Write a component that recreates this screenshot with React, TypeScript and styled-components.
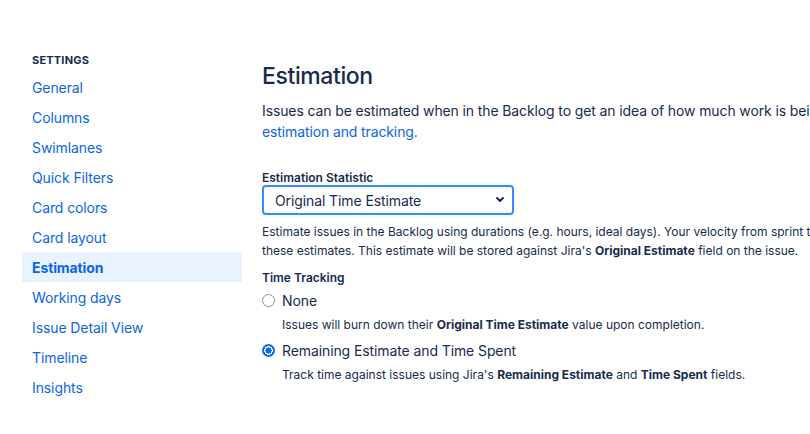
import React from "react";
import styled, { createGlobalStyle } from "styled-components";

const Global = createGlobalStyle`
  html, body { margin: 0; padding: 0; background: #fff; }
  body {
    font-family: Inter, "Noto Sans", sans-serif;
    color: #172B4D;
    -webkit-font-smoothing: antialiased;
  }
  * { box-sizing: border-box; }
`;

const Page = styled.div`
  display: flex;
  width: 810px;
  height: 434px;
  overflow: hidden;
`;

const Sidebar = styled.nav`
  flex: 0 0 220px;
  margin-left: 22px;
  padding-top: 52px;
  display: flex;
  flex-direction: column;
`;

const SideHeading = styled.div`
  font-size: 11px;
  line-height: 16px;
  font-weight: 700;
  letter-spacing: 0.2px;
  text-transform: uppercase;
  color: #172B4D;
  padding-left: 10px;
  margin-bottom: 4px;
`;

const NavItem = styled.a<{ $active?: boolean }>`
  display: flex;
  align-items: center;
  height: 30px;
  padding-left: 10px;
  font-size: 14px;
  letter-spacing: -0.1px;
  color: #0C66E4;
  text-decoration: none;
  font-weight: ${(p) => (p.$active ? 700 : 400)};
  background: ${(p) => (p.$active ? "#E9F2FF" : "transparent")};
`;

const Main = styled.main`
  flex: 0 0 auto;
  width: 720px;
  margin-left: 20px;
  padding-top: 62px;
`;

const Title = styled.h1`
  margin: 0;
  font-size: 23px;
  line-height: 28px;
  font-weight: 500;
  letter-spacing: -0.4px;
  color: #172B4D;
`;

const Intro = styled.p`
  margin: 10px 0 0;
  font-size: 14px;
  line-height: 21px;
  letter-spacing: -0.12px;
  color: #172B4D;
  width: 760px;
  white-space: nowrap;
`;

const Link = styled.a`
  color: #0C66E4;
  text-decoration: none;
`;

const FieldLabel = styled.div<{ $top: number }>`
  margin-top: ${(p) => p.$top}px;
  font-size: 12px;
  line-height: 15px;
  font-weight: 600;
  color: #172B4D;
`;

const SelectWrap = styled.div`
  position: relative;
  width: 252px;
  height: 30px;
`;

const Select = styled.select`
  appearance: none;
  width: 100%;
  height: 100%;
  border: 2px solid #388BFF;
  border-radius: 4px;
  background: #fff;
  padding: 0 24px 0 11px;
  font-family: inherit;
  font-size: 14px;
  letter-spacing: -0.1px;
  color: #172B4D;
  outline: none;
`;

const Chevron = styled.svg`
  position: absolute;
  right: 9px;
  top: 11px;
  pointer-events: none;
`;

const Help = styled.div<{ $top: number; $indent?: boolean }>`
  margin-top: ${(p) => p.$top}px;
  padding-left: ${(p) => (p.$indent ? 20 : 0)}px;
  font-size: 12px;
  line-height: 19px;
  color: #172B4D;
  white-space: nowrap;
`;

const RadioRow = styled.label<{ $top: number }>`
  display: flex;
  align-items: center;
  gap: 7px;
  margin-top: ${(p) => p.$top}px;
  height: 20px;
  font-size: 14px;
  letter-spacing: -0.1px;
  color: #172B4D;
`;

const RadioDot = styled.span<{ $checked?: boolean }>`
  width: 13px;
  height: 13px;
  border-radius: 50%;
  flex: 0 0 13px;
  border: ${(p) => (p.$checked ? "none" : "1px solid #8C8F94")};
  background: ${(p) =>
    p.$checked
      ? "radial-gradient(circle, #0B6CF2 0 3px, #fff 3.2px 4.2px, #0B6CF2 4.4px)"
      : "#fff"};
`;

const navItems = [
  "General",
  "Columns",
  "Swimlanes",
  "Quick Filters",
  "Card colors",
  "Card layout",
  "Estimation",
  "Working days",
  "Issue Detail View",
  "Timeline",
  "Insights",
];

export default function App() {
  return (
    <>
      <Global />
      <Page>
        <Sidebar>
          <SideHeading>Settings</SideHeading>
          {navItems.map((n) => (
            <NavItem key={n} $active={n === "Estimation"}>
              {n}
            </NavItem>
          ))}
        </Sidebar>
        <Main>
          <Title>Estimation</Title>
          <Intro>
            Issues can be estimated when in the Backlog to get an idea of how much work is being committed.
            <br />
            <Link>estimation and tracking.</Link>
          </Intro>
          <FieldLabel $top={28}>Estimation Statistic</FieldLabel>
          <SelectWrap>
            <Select defaultValue="ote">
              <option value="ote">Original Time Estimate</option>
            </Select>
            <Chevron width="10" height="8" viewBox="0 0 10 8">
              <path d="M2 2 L5 5 L8 2" fill="none" stroke="#172B4D" strokeWidth="2" strokeLinecap="round" strokeLinejoin="round" />
            </Chevron>
          </SelectWrap>
          <Help $top={7}>
            Estimate issues in the Backlog using durations (e.g. hours, ideal days). Your velocity from sprint to sprint will be based on
            <br />
            these estimates. This estimate will be stored against Jira's <b>Original Estimate</b> field on the issue.
          </Help>
          <FieldLabel $top={10}>Time Tracking</FieldLabel>
          <RadioRow $top={5}>
            <RadioDot />
            None
          </RadioRow>
          <Help $top={5} $indent>
            Issues will burn down their <b>Original Time Estimate</b> value upon completion.
          </Help>
          <RadioRow $top={6}>
            <RadioDot $checked />
            Remaining Estimate and Time Spent
          </RadioRow>
          <Help $top={5} $indent>
            Track time against issues using Jira's <b>Remaining Estimate</b> and <b>Time Spent</b> fields.
          </Help>
        </Main>
      </Page>
    </>
  );
}
